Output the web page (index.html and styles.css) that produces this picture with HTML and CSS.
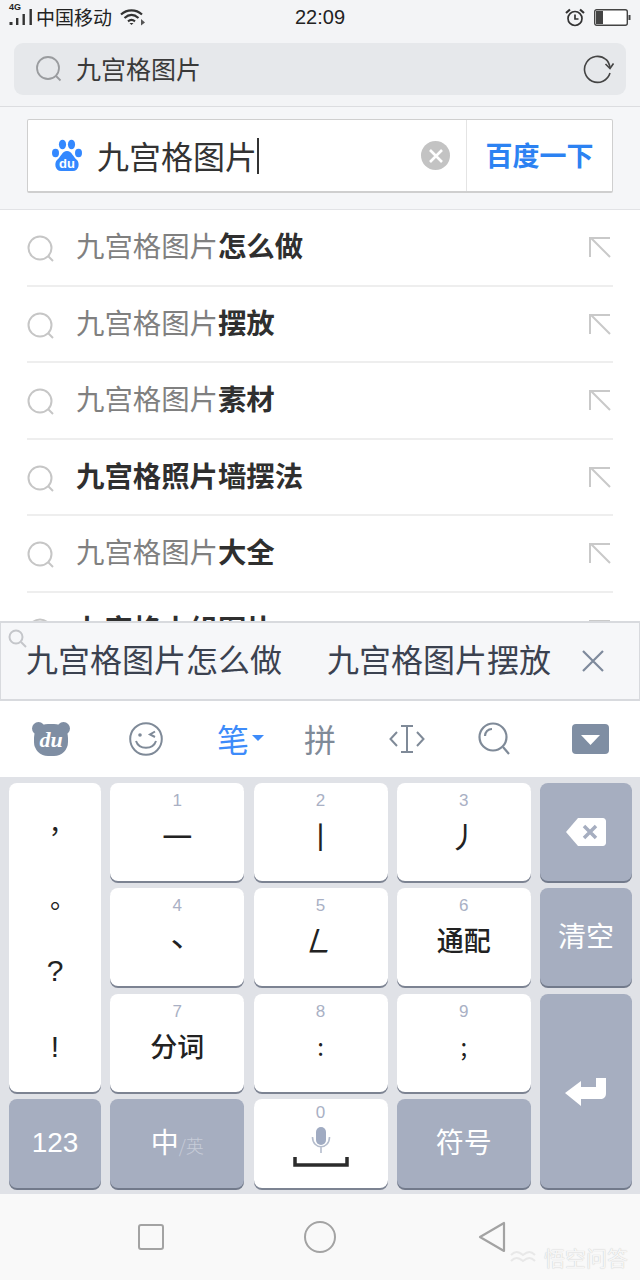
FILE: index.html
```html
<!DOCTYPE html>
<html lang="zh-CN">

<head>
    <meta charset="UTF-8">
    <meta name="viewport" content="width=device-width, initial-scale=1.0">
    <title>九宫格图片</title>
    <link rel="stylesheet" href="styles.css">
</head>

<body>
    <div id="phone">
        <!-- Status bar -->
        <div class="status">
            <div class="status-left">
                <span class="net">4G</span>
                <svg class="signal" width="24" height="18" viewBox="0 0 24 18"><rect x="0.500" y="14" width="3" height="3" fill="#333"/><rect x="7" y="10" width="2.400" height="7" fill="#333"/><rect x="13.500" y="6" width="2.400" height="11" fill="#333"/><rect x="20.500" y="1" width="2.400" height="16" fill="#333"/></svg>
                <span class="carrier">中国移动</span>
                <svg class="wifi" width="26" height="18" viewBox="0 0 26 18" fill="none" stroke="#333" stroke-width="2.200"><path d="M1 6.500C7 1 16 1 22 6.500"/><path d="M4.500 10C9 6 14 6 18.500 10"/><path d="M8 13.300C10.500 11.300 12.500 11.300 15 13.300"/><path d="M11.500 17L9.500 15H13.500Z" fill="#333" stroke="none"/><path d="M21 11L25 14.500L21 17.500Z" fill="#555" stroke="none"/></svg>
            </div>
            <div class="time">22:09</div>
            <div class="status-right">
                <svg width="20" height="19" viewBox="0 0 20 19" fill="none" stroke="#333" stroke-width="1.700"><circle cx="10" cy="10.500" r="7"/><path d="M10 6.500V11H13.500"/><path d="M1 5L5 1.500M19 5L15 1.500" stroke-width="2.200"/></svg>
                <svg class="battery" width="37" height="17" viewBox="0 0 37 17"><rect x="0.700" y="0.700" width="32.600" height="15.600" rx="2" fill="#fff" stroke="#444" stroke-width="1.400"/><rect x="2" y="2" width="7" height="13" fill="#444"/><rect x="34.500" y="6" width="2" height="5" fill="#444"/></svg>
            </div>
        </div>

        <!-- Browser address bar -->
        <div class="browser">
            <div class="address">
                <svg class="addr-search" width="28" height="28" viewBox="0 0 28 28" fill="none" stroke="#9a9c9f" stroke-width="1.800"><circle cx="13" cy="13" r="11"/><path d="M21 21L25.500 25.500"/></svg>
                <span class="address-text">九宫格图片</span>
                <svg class="refresh" width="32" height="30" viewBox="0 0 32 30" fill="none" stroke="#444" stroke-width="1.600"><path d="M28 19A13 13 0 1 1 24 5.500C26 7 27 9 28 13"/><path d="M23.500 10L28 14.500L31.500 9.500"/></svg>
            </div>
        </div>

        <!-- Baidu search box -->
        <div class="search-area">
            <div class="search-box">
                <svg class="paw" width="30" height="33" viewBox="0 0 30 33"><ellipse cx="3.500" cy="14" rx="3.500" ry="4.200" fill="#3388ff"/><ellipse cx="10.500" cy="5.500" rx="3.600" ry="4.800" fill="#3388ff"/><ellipse cx="19.500" cy="5.500" rx="3.600" ry="4.800" fill="#3388ff"/><ellipse cx="26.500" cy="14" rx="3.500" ry="4.200" fill="#3388ff"/><path d="M15 12C20 12 21 18 25 21C28 24 27 32 21 32H9C3 32 2 24 5 21C9 18 10 12 15 12Z" fill="#3388ff"/><text x="15" y="29" text-anchor="middle" class="paw-du">du</text></svg>
                <span class="query">九宫格图片</span><span class="caret"></span>
                <span class="clear-btn"><svg width="16" height="16" viewBox="0 0 16 16" stroke="#fff" stroke-width="2.600"><path d="M2 2L14 14M14 2L2 14"/></svg></span>
                <span class="go">百度一下</span>
            </div>
        </div>

        <!-- Suggestions -->
        <div class="list">
            <div class="row"><svg class="s-icon" width="28" height="28" viewBox="0 0 28 28" fill="none" stroke="#c6c6c6" stroke-width="2"><circle cx="13" cy="13" r="11.500"/><path d="M21 21L26 26"/></svg><span class="sug">九宫格图片<b>怎么做</b></span><svg class="a-icon" width="24" height="24" viewBox="0 0 24 24" fill="none" stroke="#c9c9c9" stroke-width="2"><path d="M2 22V3H22M3 3L22 22"/></svg></div>
            <div class="row"><svg class="s-icon" width="28" height="28" viewBox="0 0 28 28" fill="none" stroke="#c6c6c6" stroke-width="2"><circle cx="13" cy="13" r="11.500"/><path d="M21 21L26 26"/></svg><span class="sug">九宫格图片<b>摆放</b></span><svg class="a-icon" width="24" height="24" viewBox="0 0 24 24" fill="none" stroke="#c9c9c9" stroke-width="2"><path d="M2 22V3H22M3 3L22 22"/></svg></div>
            <div class="row"><svg class="s-icon" width="28" height="28" viewBox="0 0 28 28" fill="none" stroke="#c6c6c6" stroke-width="2"><circle cx="13" cy="13" r="11.500"/><path d="M21 21L26 26"/></svg><span class="sug">九宫格图片<b>素材</b></span><svg class="a-icon" width="24" height="24" viewBox="0 0 24 24" fill="none" stroke="#c9c9c9" stroke-width="2"><path d="M2 22V3H22M3 3L22 22"/></svg></div>
            <div class="row"><svg class="s-icon" width="28" height="28" viewBox="0 0 28 28" fill="none" stroke="#c6c6c6" stroke-width="2"><circle cx="13" cy="13" r="11.500"/><path d="M21 21L26 26"/></svg><span class="sug"><b>九宫格照片墙摆法</b></span><svg class="a-icon" width="24" height="24" viewBox="0 0 24 24" fill="none" stroke="#c9c9c9" stroke-width="2"><path d="M2 22V3H22M3 3L22 22"/></svg></div>
            <div class="row"><svg class="s-icon" width="28" height="28" viewBox="0 0 28 28" fill="none" stroke="#c6c6c6" stroke-width="2"><circle cx="13" cy="13" r="11.500"/><path d="M21 21L26 26"/></svg><span class="sug">九宫格图片<b>大全</b></span><svg class="a-icon" width="24" height="24" viewBox="0 0 24 24" fill="none" stroke="#c9c9c9" stroke-width="2"><path d="M2 22V3H22M3 3L22 22"/></svg></div>
            <div class="row"><svg class="s-icon" width="28" height="28" viewBox="0 0 28 28" fill="none" stroke="#c6c6c6" stroke-width="2"><circle cx="13" cy="13" r="11.500"/><path d="M21 21L26 26"/></svg><span class="sug"><b>九宫格小组图片</b></span><svg class="a-icon" width="24" height="24" viewBox="0 0 24 24" fill="none" stroke="#c9c9c9" stroke-width="2"><path d="M2 22V3H22M3 3L22 22"/></svg></div>
        </div>

        <!-- Keyboard candidates -->
        <div class="candidates">
            <svg class="cand-search" width="20" height="20" viewBox="0 0 20 20" fill="none" stroke="#c4c6ca" stroke-width="2"><circle cx="8" cy="8" r="6.500"/><path d="M13 13L18 18"/></svg>
            <span class="cand">九宫格图片怎么做</span>
            <span class="cand">九宫格图片摆放</span>
            <svg class="cand-close" width="22" height="22" viewBox="0 0 22 22" stroke="#7e8a9c" stroke-width="2.200"><path d="M1 1L21 21M21 1L1 21"/></svg>
        </div>

        <!-- Keyboard toolbar -->
        <div class="toolbar">
            <svg class="t-du" width="38" height="34" viewBox="0 0 38 34"><circle cx="6.500" cy="6.500" r="6.500" fill="#7f8ea3"/><circle cx="31.500" cy="6.500" r="6.500" fill="#7f8ea3"/><rect x="2" y="2" width="34" height="32" rx="14" fill="#7f8ea3"/><text x="19" y="25" text-anchor="middle" class="bear-du">du</text></svg>
            <svg class="t-smile" width="34" height="34" viewBox="0 0 34 34" fill="none" stroke="#7f8a98" stroke-width="2"><circle cx="17" cy="17" r="15.800"/><path d="M7 19C10 28 24 28 27 19"/><circle cx="11" cy="13" r="1.800" fill="#7f8a98" stroke="none"/><path d="M26 9.500L21 12.500L26 15"/></svg>
            <span class="t-bi">笔<i class="tri"></i></span>
            <span class="t-pin">拼</span>
            <svg class="t-cursor" width="36" height="30" viewBox="0 0 36 30" fill="none" stroke="#7f8a98" stroke-width="2"><path d="M8 8L1.500 15L8 22M28 8L34.500 15L28 22"/><path d="M12 2H24M12 28H24M18 2V28"/></svg>
            <svg class="t-search" width="34" height="34" viewBox="0 0 34 34" fill="none" stroke="#7f8a98" stroke-width="2.200"><circle cx="15" cy="15" r="13.500"/><path d="M25 25L31 32M7 14C7 10 10 7 14 7"/></svg>
            <svg class="t-down" width="37" height="30" viewBox="0 0 37 30"><rect width="37" height="30" rx="4" fill="#7f8ea3"/><path d="M9 11H28L18.500 21Z" fill="#fff"/></svg>
        </div>

        <!-- Keys -->
        <div class="keyboard">
            <div class="key punct"><span class="p-comma">，</span><span class="p-dot">。</span><span class="p-q">?</span><span class="p-ex">!</span></div>
            <div class="key"><span class="num">1</span><span class="main">一</span></div>
            <div class="key"><span class="num">2</span><span class="main">丨</span></div>
            <div class="key"><span class="num">3</span><span class="main">丿</span></div>
            <div class="key dark"><svg width="40" height="28" viewBox="0 0 40 28"><path d="M12 0H37C38.500 0 40 1.500 40 3V25C40 26.500 38.500 28 37 28H12L0 14Z" fill="#fff"/><path d="M18 8L30 20M30 8L18 20" stroke="#a6aec0" stroke-width="3.500"/></svg></div>
            <div class="key"><span class="num">4</span><span class="main small-stroke">丶</span></div>
            <div class="key"><span class="num">5</span><span class="main slant">㇗</span></div>
            <div class="key"><span class="num">6</span><span class="main word">通配</span></div>
            <div class="key dark label">清空</div>
            <div class="key"><span class="num">7</span><span class="main word">分词</span></div>
            <div class="key"><span class="num">8</span><span class="main mark">:</span></div>
            <div class="key"><span class="num">9</span><span class="main mark">;</span></div>
            <div class="key dark enter"><svg width="42" height="30" viewBox="0 0 42 30"><path d="M16 3V9H31V0H41V15C41 19 39 21 35 21H16V28L0 15Z" fill="#fff"/></svg></div>
            <div class="key dark label num-key">123</div>
            <div class="key dark label lang">中<small>/英</small></div>
            <div class="key space">
                <span class="num">0</span>
                <svg class="mic" width="20" height="26" viewBox="0 0 20 26"><rect x="5" y="0" width="10" height="18" rx="5" fill="#a0abc2"/><path d="M1.500 10C1.500 23 18.500 23 18.500 10M10 20V26" fill="none" stroke="#b4bccc" stroke-width="1.600"/></svg>
                <svg class="bar" width="56" height="10" viewBox="0 0 56 10"><path d="M2 0V8H54V0" fill="none" stroke="#2b2b2b" stroke-width="3.500"/></svg>
            </div>
            <div class="key dark label">符号</div>
        </div>

        <!-- Android nav -->
        <div class="nav">
            <svg class="n-square" width="26" height="26" viewBox="0 0 26 26" fill="none" stroke="#a3a3a3" stroke-width="2"><rect x="1" y="1" width="24" height="24" rx="2"/></svg>
            <svg class="n-circle" width="32" height="32" viewBox="0 0 32 32" fill="none" stroke="#a3a3a3" stroke-width="2"><circle cx="16" cy="16" r="15"/></svg>
            <svg class="n-back" width="28" height="32" viewBox="0 0 28 32" fill="none" stroke="#a3a3a3" stroke-width="2.200" stroke-linejoin="round"><path d="M26 2V30L2 16Z"/></svg>
            <div class="watermark"><svg width="26" height="16" viewBox="0 0 26 16" fill="none" stroke="#e8e8e8" stroke-width="2"><path d="M1 6C5 2 8 2 13 6C18 2 21 2 25 6M1 12C5 8 8 8 13 12C18 8 21 8 25 12"/></svg><span>悟空问答</span></div>
        </div>
    </div>
</body>

</html>
```

FILE: styles.css
```css
* {
    box-sizing: border-box;
}

body {
    margin: 0px;
    padding: 0px;
    font-family: "Noto Sans CJK SC", "Liberation Sans", sans-serif;
}

#phone {
    width: 640px;
    height: 1280px;
    display: flex;
    flex-direction: column;
    overflow: hidden;
    background: #f3f4f6;
}

/* Status bar */
.status {
    height: 43px;
    flex: none;
    display: grid;
    grid-template-columns: 1fr auto 1fr;
    align-items: center;
    padding: 0 9px 9px;
    color: #222;
}

.status-left {
    display: flex;
    align-items: center;
    position: relative;
}

.net {
    position: absolute;
    left: 0;
    top: -2px;
    font-family: "Liberation Sans", sans-serif;
    font-size: 9px;
    font-weight: bold;
    line-height: 10px;
}

.carrier {
    font-size: 19px;
    line-height: 26px;
    margin-left: 3px;
}

.wifi {
    margin-left: 8px;
}

.time {
    font-family: "Liberation Sans", sans-serif;
    font-size: 20px;
}

.status-right {
    display: flex;
    justify-content: flex-end;
    align-items: center;
    gap: 9px;
}

/* Browser address bar */
.browser {
    height: 64px;
    flex: none;
    padding: 0 14px;
    border-bottom: 1px solid #dcdde0;
}

.address {
    height: 52px;
    display: flex;
    align-items: center;
    padding: 0 12px 0 21px;
    background: #e6e8eb;
    border-radius: 9px;
}

.address-text {
    margin: 0 0 3px 13px;
    font-size: 25px;
    color: #3a3a3a;
}

.refresh {
    margin-left: auto;
}

/* Search box */
.search-area {
    height: 103px;
    flex: none;
    padding: 12px 27px 0;
    background: #f5f6f8;
    border-bottom: 1px solid #e2e3e6;
}

.search-box {
    height: 74px;
    display: flex;
    align-items: center;
    background: #fff;
    border: 1px solid #cfcfcf;
    border-bottom-width: 2px;
    border-radius: 2px;
    padding-left: 24px;
}

.paw-du {
    font-family: "Liberation Sans", sans-serif;
    font-size: 13px;
    font-weight: bold;
    fill: #fff;
}

.bear-du {
    font-family: "Liberation Serif", serif;
    font-size: 22px;
    font-style: italic;
    font-weight: bold;
    fill: #fff;
}

.query {
    margin: 0 0 2px 15px;
    font-size: 32px;
    color: #333;
}

.caret {
    width: 2px;
    height: 36px;
    background: #333;
}

.clear-btn {
    width: 29px;
    height: 29px;
    margin-left: auto;
    border-radius: 50%;
    background: #c3c3c3;
    display: flex;
    justify-content: center;
    align-items: center;
}

.go {
    width: 146px;
    height: 100%;
    margin-left: 16px;
    padding-bottom: 2px;
    display: flex;
    justify-content: center;
    align-items: center;
    border-left: 1px solid #e4e4e4;
    color: #2c82f2;
    font-size: 27px;
    font-weight: bold;
}

/* Suggestions */
.list {
    height: 411px;
    flex: none;
    padding: 0 27px;
    background: #fff;
    overflow: hidden;
}

.row {
    height: 76.5px;
    display: flex;
    align-items: center;
    border-bottom: 2px solid #eeeeee;
}

.s-icon {
    margin-top: 4px;
}

.sug {
    margin: 0 0 5px 21px;
    font-size: 28.4px;
    color: #808080;
}

.sug b {
    color: #2f2f2f;
}

.a-icon {
    margin-left: auto;
    margin-right: 1px;
}

/* Candidates */
.candidates {
    height: 80px;
    flex: none;
    position: relative;
    display: flex;
    align-items: center;
    gap: 45px;
    padding-left: 25px;
    background: #f6f7f9;
    border: 1px solid #d8dade;
    border-top-width: 2px;
    border-bottom-width: 2px;
}

.cand {
    flex: none;
    margin-bottom: 6px;
    font-size: 32px;
    color: #3b4250;
    white-space: nowrap;
}

.cand-search {
    position: absolute;
    left: 7px;
    top: 6px;
}

.cand-close {
    flex: none;
    margin-left: -14px;
}

/* Toolbar */
.toolbar {
    height: 76px;
    flex: none;
    display: flex;
    align-items: center;
    padding-left: 32px;
    background: #fff;
    color: #7f8a98;
    font-size: 32px;
}

.t-smile {
    margin-left: 59px;
}

.t-bi {
    width: 47px;
    margin-left: 54px;
    margin-bottom: 2px;
    color: #3d8bfa;
    display: flex;
    align-items: center;
    gap: 3px;
}

.tri {
    border-top: 6px solid #3d8bfa;
    border-left: 6px solid transparent;
    border-right: 6px solid transparent;
}

.t-pin {
    margin-left: 40px;
    margin-bottom: 2px;
}

.t-cursor {
    margin-left: 53px;
}

.t-search {
    margin-left: 53px;
}

.t-down {
    margin-left: 60px;
}

/* Keys */
.keyboard {
    height: 417px;
    flex: none;
    display: grid;
    grid-template-columns: 92px 134px 134px 134px 92px;
    grid-template-rows: 98px 98px 98px 89px;
    column-gap: 9.25px;
    row-gap: 7.25px;
    padding: 6px 0 0 9px;
    background: #e0e2e7;
}

.key {
    display: flex;
    flex-direction: column;
    align-items: center;
    background: #fff;
    border-radius: 8px;
    box-shadow: 0 2px 0 #7c8392;
    color: #222;
}

.num {
    height: 20px;
    margin-top: 8px;
    font-family: "Liberation Sans", sans-serif;
    font-size: 17px;
    line-height: 20px;
    color: #a9b0c4;
}

.main {
    height: 36px;
    margin-top: 6px;
    font-size: 30px;
    line-height: 36px;
}

.main.word {
    font-size: 27px;
    font-weight: 500;
}

.main.small-stroke {
    margin-top: 11px;
    font-size: 20px;
    font-weight: bold;
}

.slant {
    font-size: 33px;
    transform: skewX(-18deg);
}

.main.mark {
    margin-top: 6px;
    font-size: 24px;
}

.punct {
    grid-row: 1 / span 3;
    padding-top: 29px;
    font-size: 26px;
    line-height: 36px;
    font-family: "Noto Sans CJK TC", sans-serif;
}

.p-dot {
    margin-top: 39px;
}

.p-q,
.p-ex {
    font-family: "Liberation Sans", sans-serif;
    font-size: 30px;
}

.p-q {
    margin-top: 30px;
}

.p-ex {
    margin-top: 40px;
}

.dark {
    justify-content: center;
    background: #a6aec0;
    color: #fff;
    box-shadow: 0 2px 0 #727a8b;
}

.label {
    padding-bottom: 4px;
    font-size: 28px;
}

.lang {
    flex-direction: row;
    align-items: baseline;
    align-content: center;
    padding-top: 22px;
}

.label small {
    font-size: 18px;
    font-weight: 300;
    color: #c6ccd8;
}

.num-key {
    padding-bottom: 0;
    font-family: "Liberation Sans", sans-serif;
}

.enter {
    grid-row: 3 / span 2;
    grid-column: 5;
    padding-top: 4px;
}

.space .num {
    margin-top: 4px;
}

.mic {
    margin-top: 4px;
}

.bar {
    margin-top: 4px;
}

/* Android nav */
.nav {
    flex: 1;
    position: relative;
    display: flex;
    align-items: center;
    padding: 0 0 0 138px;
    background: #f9f9f9;
}

.n-circle {
    margin-left: 140px;
}

.n-back {
    margin-left: 142px;
}

.watermark {
    position: absolute;
    right: 12px;
    bottom: 8px;
    display: flex;
    align-items: center;
    gap: 8px;
    font-size: 21px;
    color: #f6f6f6;
    text-shadow: 0 0 1px #bdbdbd;
}
```
